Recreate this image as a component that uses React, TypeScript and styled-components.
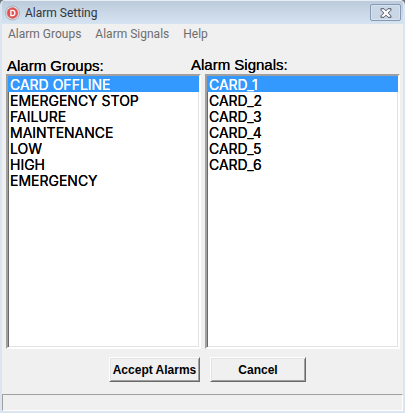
import React, { useState } from 'react';
import styled, { createGlobalStyle } from 'styled-components';

const GlobalStyle = createGlobalStyle`
  *, *::before, *::after { box-sizing: border-box; }
  body { margin: 0; background: #6f737a; }
`;

const systemFont = '"Liberation Sans", Arial, sans-serif';
const chromeFont = 'Roboto, "Segoe UI", sans-serif';

const Window = styled.div`
  display: flex;
  flex-direction: column;
  min-height: 100vh;
  border: solid #dbe4f1;
  border-width: 0 2px 2px;
  border-radius: 5px 5px 0 0;
  background: #f0f0f0;
  overflow: hidden;
  color: #000;
  font-family: ${systemFont};
`;

const TitleBar = styled.header`
  display: flex;
  align-items: center;
  gap: 5px;
  height: 24px;
  padding: 0 2px 0 3px;
  border-top: 1px solid #e6edf5;
  background: linear-gradient(#bccbdb, #d6e3f1);
`;

const Title = styled.h1`
  flex: 1;
  margin: 0;
  font: 400 12px/20px ${chromeFont};
  color: #30353d;
`;

const CloseButton = styled.button`
  display: flex;
  align-items: center;
  justify-content: center;
  width: 31px;
  height: 17px;
  padding: 0;
  border: 1px solid #8798b4;
  border-radius: 2px;
  background: #c8d6e5;
  box-shadow: inset 0 0 0 1px #d6e2ef;
`;

const MenuBar = styled.nav`
  display: flex;
  gap: 14px;
  height: 20px;
  padding: 0 6px;
`;

const MenuButton = styled.button`
  padding: 0;
  border: 0;
  background: none;
  font: 400 12px/20px ${chromeFont};
  color: #6d6d6d;
`;

const Lists = styled.main`
  flex: 1;
  display: grid;
  grid-template-columns: 1fr 1fr;
  gap: 4px;
  padding: 12px 3px 0 4px;
`;

const ListField = styled.div`
  display: flex;
  flex-direction: column;
  min-width: 0;
`;

const ListLabel = styled.label<{ $outdent?: boolean }>`
  height: 18px;
  margin-left: ${(p) => (p.$outdent ? '-14px' : '1px')};
  font-size: 15px;
  line-height: ${(p) => (p.$outdent ? '18px' : '20px')};
  text-shadow: 0 0 0 #000;
`;

const ListBox = styled.select`
  flex: 1;
  width: 100%;
  padding: 0;
  border: 2px solid;
  border-color: #a0a0a0 #fff #fff #a0a0a0;
  border-radius: 0;
  outline: 0;
  background: #fff;
  box-shadow: inset 1px 1px #696969, inset -1px -1px #e3e3e3;
  font: 400 14px/16px Inter, ${systemFont};
  overflow: hidden;
`;

const ListOption = styled.option`
  height: 16px;
  min-height: 16px;
  padding: 0 2px;
  line-height: 14px;
  text-shadow: 0 0 0 #000;
  -webkit-text-fill-color: #000;

  &:checked {
    background: linear-gradient(#3399ff, #3399ff);
    text-shadow: 0 0 0 #fff;
    -webkit-text-fill-color: #fff;
  }
`;

const Actions = styled.div`
  display: flex;
  justify-content: center;
  gap: 10px;
  padding: 8px 0 12px 10px;
`;

const ActionButton = styled.button<{ $wide?: boolean }>`
  width: ${(p) => (p.$wide ? '96px' : '91px')};
  height: 25px;
  padding: 0;
  border: 1px solid;
  border-color: #fff #696969 #696969 #fff;
  background: #f0f0f0;
  box-shadow: inset 1px 1px #e3e3e3, inset -1px -1px #a0a0a0;
  font: 700 12px/20px ${systemFont};
  color: #000;
  white-space: nowrap;
`;

const StatusBar = styled.footer`
  height: 17px;
  border: 1px solid;
  border-color: #a0a0a0 #fff #fff #a0a0a0;
`;

const AppIcon = () => (
  <svg width="15" height="16" viewBox="0 0 16 16" aria-hidden="true">
    <circle cx="8" cy="8" r="7.5" fill="#e7e4e8" stroke="#9fa8b8" strokeWidth=".9" />
    <circle cx="8" cy="8" r="5.8" fill="#e2514f" stroke="#cf7476" strokeWidth=".6" />
    <path d="M6.3 5.2h1.5a2.7 2.7 0 0 1 0 5.5H6.3z" fill="none" stroke="#fff" strokeWidth="1.4" />
  </svg>
);

const CloseIcon = () => (
  <svg width="12" height="10" viewBox="0 0 12 10" aria-hidden="true">
    <path
      d="M1 .7h3L6 2.8 8 .7h3v1.5L8.2 5 11 7.8v1.5H8L6 7.2 4 9.3H1V7.8L3.8 5 1 2.2z"
      fill="#fafafa"
      stroke="#535666"
      strokeWidth="1"
      strokeLinejoin="round"
    />
  </svg>
);

const menus = ['Alarm Groups', 'Alarm Signals', 'Help'];
const groups = ['CARD OFFLINE', 'EMERGENCY STOP', 'FAILURE', 'MAINTENANCE', 'LOW', 'HIGH', 'EMERGENCY'];
const signals = ['CARD_1', 'CARD_2', 'CARD_3', 'CARD_4', 'CARD_5', 'CARD_6'];

interface ListProps {
  id: string;
  label: string;
  items: string[];
  outdent?: boolean;
}

function List({ id, label, items, outdent }: ListProps) {
  const [value, setValue] = useState(items[0]);
  return (
    <ListField>
      <ListLabel htmlFor={id} $outdent={outdent}>{label}</ListLabel>
      <ListBox id={id} size={8} value={value} onChange={(e) => setValue(e.target.value)}>
        {items.map((item) => (
          <ListOption key={item} value={item}>{item}</ListOption>
        ))}
      </ListBox>
    </ListField>
  );
}

export default function App() {
  return (
    <>
      <GlobalStyle />
      <Window>
        <TitleBar>
          <AppIcon />
          <Title>Alarm Setting</Title>
          <CloseButton type="button" aria-label="Close"><CloseIcon /></CloseButton>
        </TitleBar>
        <MenuBar>
          {menus.map((menu) => (
            <MenuButton key={menu} type="button">{menu}</MenuButton>
          ))}
        </MenuBar>
        <Lists>
          <List id="groups" label="Alarm Groups:" items={groups} />
          <List id="signals" label="Alarm Signals:" items={signals} outdent />
        </Lists>
        <Actions>
          <ActionButton type="button">Accept Alarms</ActionButton>
          <ActionButton type="button" $wide>Cancel</ActionButton>
        </Actions>
        <StatusBar />
      </Window>
    </>
  );
}
